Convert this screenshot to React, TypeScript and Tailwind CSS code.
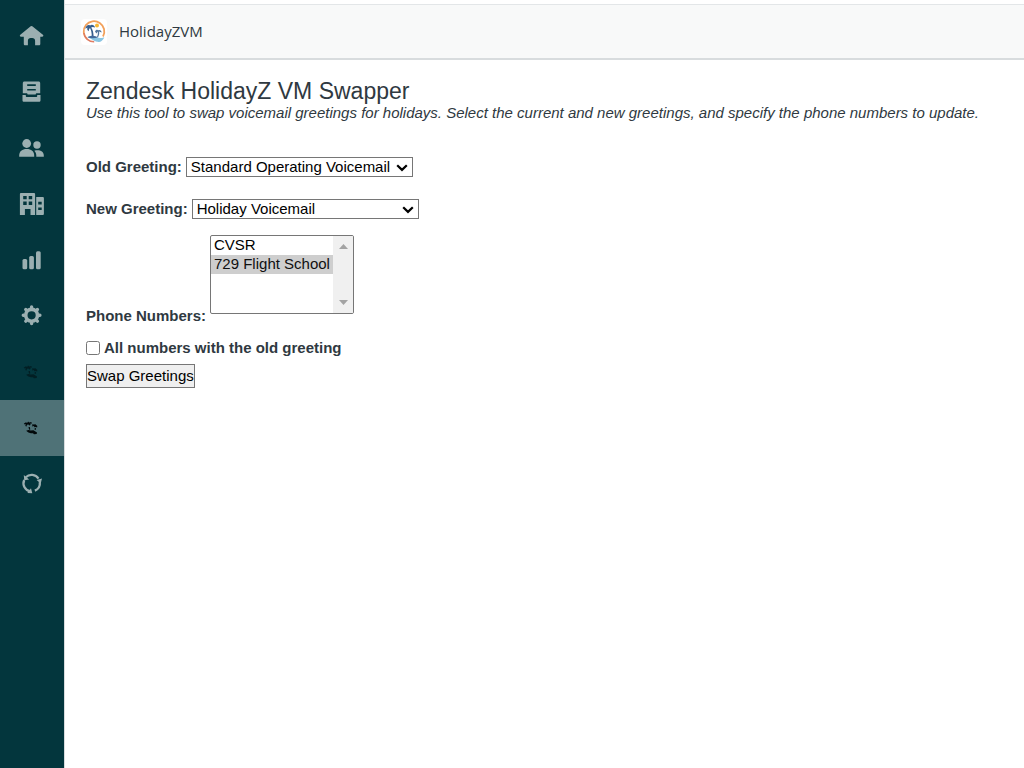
import React from 'react';

const navItems = [
  {
    label: 'Home',
    icon: (
      <svg width="26" height="26" viewBox="0 0 26 26" fill="currentColor">
        <path d="M11.7 3.3a1.3 1.3 0 0 1 1.6 0l10.6 8.4c1 .9.4 2-.8 2h-1.800v7c0 1-.5 1.600-1.400 1.600h-3.800v-4.600c0-1.700-1.200-2.700-2.800-2.700h-1.600c-1.600 0-2.800 1-2.800 2.700v4.600H6.200c-.9 0-1.400-.6-1.400-1.600v-7H2.100c-1.200 0-1.800-1.100-.8-2z" />
      </svg>
    ),
  },
  {
    label: 'Views',
    icon: (
      <svg width="26" height="26" viewBox="0 0 26 26" fill="currentColor">
        <path fillRule="evenodd" d="M5.500 2.500h14c1 0 1.700.7 1.700 1.700v10h-3.200c-.8 0-1.300.5-1.300 1.300H8.600c0-.8-.5-1.300-1.300-1.300H3.800v-10c0-1 .7-1.700 1.700-1.700zM8.200 5.300v1.600h8.600V5.300zm0 4.700v1.600h8.600V10z" />
        <path d="M3.500 16h3.300v.9c0 .7.400 1.100 1 1.100h9.400c.6 0 1-.4 1-1.100V16h3.300v5.200c0 1-.6 1.500-1.600 1.500H5.100c-1 0-1.600-.5-1.600-1.500z" />
      </svg>
    ),
  },
  {
    label: 'Customers',
    icon: (
      <svg width="26" height="26" viewBox="0 0 26 26" fill="currentColor">
        <circle cx="7.700" cy="8.500" r="4.400" />
        <circle cx="18" cy="10" r="3.700" />
        <path d="M.2 21.700v-1.300c0-4 3-6.400 7.500-6.400s7.500 2.400 7.500 6.400v1.300z" />
        <path d="M15.300 15.700c5-1.400 9.500.6 9.500 4.700v1.300h-7.500c.2-2.500-.3-4.400-2-6z" />
      </svg>
    ),
  },
  {
    label: 'Organizations',
    icon: (
      <svg width="26" height="26" viewBox="0 0 26 26" fill="currentColor">
        <path fillRule="evenodd" d="M2.200 2h12.600c.8 0 1.300.5 1.300 1.300V24h-4.600v-6H5.900v6H.9V3.300C.9 2.500 1.400 2 2.200 2zM4.200 5v3.300h3.500V5zm5.500 0v3.300h3.500V5zM4.200 10.500v3.400h3.500v-3.400zm5.500 0v3.400h3.500v-3.400z" />
        <path fillRule="evenodd" d="M17.200 6h6.400c.8 0 1.300.5 1.300 1.300v15.400c0 .8-.5 1.300-1.300 1.300h-6.400zm2 4.800v2.700h3.500v-2.700zm0 5.600v2.700h3.500v-2.700z" />
      </svg>
    ),
  },
  {
    label: 'Reporting',
    icon: (
      <svg width="26" height="26" viewBox="0 0 26 26" fill="currentColor">
        <rect x="3.500" y="12" width="4.700" height="10.300" rx="1.500" />
        <rect x="10.200" y="9" width="4.700" height="13.300" rx="1.500" />
        <rect x="17" y="4.300" width="4.700" height="18" rx="1.500" />
      </svg>
    ),
  },
  {
    label: 'Admin',
    icon: (
      <svg width="26" height="26" viewBox="0 0 26 26" fill="none" stroke="currentColor">
        <circle cx="12.600" cy="12.300" r="5.900" strokeWidth="3.600" />
        <path
          d="M12.600 4.700v-.7M12.600 19.900v.7M5 12.300h-.7M20.200 12.300h.7M7.300 7l-.5-.5M17.900 7l.5-.5M7.300 17.600l-.5.5M17.900 17.600l.5.5"
          strokeWidth="3.400"
          strokeLinecap="round"
        />
      </svg>
    ),
  },
  { label: 'HolidayZ', icon: <PalmGlyph faded /> },
  { label: 'HolidayZVM', icon: <PalmGlyph />, active: true },
  {
    label: 'Sync',
    icon: (
      <svg width="26" height="26" viewBox="0 0 26 26" fill="none" stroke="currentColor" strokeWidth="2.300">
        <path d="M6.800 6.300A8.300 8.300 0 0 1 19.500 7.600M20.800 11a8.300 8.300 0 0 1-4.900 8.600M11.500 20.500a8.300 8.300 0 0 1-6.300-11.500" />
        <path fill="currentColor" stroke="none" d="M4.800 4l.4 5.200 4.900-.8zM23 7.600l-5.400 1.500 4.100 3.300zM8.300 22l5 .2-1.300-4.900z" />
      </svg>
    ),
  },
];

function PalmGlyph({ faded }: { faded?: boolean }) {
  return (
    <svg width="26" height="26" viewBox="0 0 26 26" fill="#02080a" className={faded ? 'opacity-50' : 'opacity-100'}>
      <path d="M4.800 8.800l1.600-1.300 2 .2.700-1.200 1 1 2.300-.4.300 1.700-1.500-.3.300 1.300-1 .6-1.100-1-1.500.4-.3 1.600-1.300-.3.600-2-1 .3z" />
      <path d="M13.300 9.300l1.600.2 1.500-.3 1.900 1.800-.2 1.500-1.300-.6-1.300.3-.7-1.200-1.500.6zM9.500 11.900l1.300.1.500 2.500-1.200.2zM15.600 13.300l1.200-.2.200 1.500-1.200.4z" />
      <path d="M7.200 15.800l2.200-.9 2.400.6 2.600-.2 3.600 2.100-.3 1.500-2.700.3-1-.9-2.200-.1-2.300-.6-1.400-1z" />
    </svg>
  );
}

const AppLogo = () => (
  <svg width="26" height="26" viewBox="0 0 26 26" fill="none">
    <path d="M6 20A10.300 10.300 0 1 1 22 17.500" stroke="#f2a05a" strokeWidth="1.800" />
    <path d="M2.800 14a10.300 10.300 0 0 0 10.400 8.800" stroke="#df7c62" strokeWidth="1.500" />
    <circle cx="16" cy="6.600" r="2" fill="#f7b733" />
    <path d="M4.300 9.800C4.800 6.500 7.400 5.300 9 6.400c2-1.200 4.400-.4 5 2-1.700-.7-2.800-.7-3.800 0 1.800 2.600 2.300 5.300 2.400 9.100h-1.800c0-3.700-.6-6.300-1.800-8.500-.9.800-1.300 1.800-1.200 3.300-1.600-1-2-2-1.300-3.700z" fill="#365e8d" />
    <path d="M14 12.400c.8-2 2.500-2 3.400-1.200 1.700-.7 3.100.5 3.200 2.300l-2.500-1c.4 2 0 3.800-1 5.600H16c.8-2 1.100-3.800.7-5.500l-1.300 1.800z" fill="#52769d" />
    <path d="M6.700 18.200c3-1.600 7.700-1.300 11.100.5 2.500.8 4.200.3 5.500-.8-.8 3.300-4 5.700-7.300 4.900-3.600-.8-5.400-3.300-9.300-4.600z" fill="#8ac5e2" />
    <path d="M6.500 18.200c3-2 7-2 10.500 0-3 1.400-7 1.600-10.500 0z" fill="#42699a" />
  </svg>
);

const GreetingSelect: React.FC<{ id: string; label: string; value: string }> = ({ id, label, value }) => (
  <div className="mb-[22px] flex items-center gap-1">
    <label htmlFor={id} className="font-bold">{label}</label>
    <div className="relative">
      <select id={id} className="block h-5 w-[227px] appearance-none border border-[#767676] bg-white px-1 leading-4 text-black">
        <option>{value}</option>
      </select>
      <svg
        width="12"
        height="8"
        viewBox="0 0 12 8"
        fill="none"
        stroke="#000"
        strokeWidth="2.200"
        className="pointer-events-none absolute top-[7px] right-[5px]"
      >
        <path d="M1.200 1.200L6 5.900l4.800-4.700" />
      </svg>
    </div>
  </div>
);

const App: React.FC = () => {
  return (
    <div className="flex min-h-screen bg-white font-['Liberation_Sans',Arial,sans-serif] text-[#2f3941]">
      <nav className="w-16 shrink-0 bg-[#03363d] pt-2 text-[#9bafb1]">
        {navItems.map((item) => (
          <a
            key={item.label}
            href="#"
            aria-label={item.label}
            className={`flex h-14 items-center justify-center ${item.active ? 'bg-[#4f7277]' : ''}`}
          >
            {item.icon}
          </a>
        ))}
      </nav>

      <div className="min-w-0 flex-1 border-l border-[#d8dcde] pt-1">
        <header className="flex h-14 items-center gap-3 border-t border-b-2 border-t-[#e3e6e8] border-b-[#d8dcde] bg-[#f8f9f9] px-4">
          <span className="rounded bg-white">
            <AppLogo />
          </span>
          <span className="font-['Open_Sans',sans-serif] text-[15px] font-medium">HolidayZVM</span>
        </header>

        <main className="px-[21px] pt-5 text-[15px] leading-5">
          <h1 className="text-[23px] leading-[23px]">Zendesk HolidayZ VM Swapper</h1>
          <p className="italic">
            Use this tool to swap voicemail greetings for holidays. Select the current and new greetings, and specify the phone numbers to update.
          </p>

          <form className="pt-[34px]" onSubmit={(e) => e.preventDefault()}>
            <GreetingSelect id="old" label="Old Greeting:" value="Standard Operating Voicemail" />
            <GreetingSelect id="new" label="New Greeting:" value="Holiday Voicemail" />
            <div className="-mt-1.5 flex items-end gap-1">
              <label htmlFor="phones" className="-mb-3 font-bold">Phone Numbers:</label>
              <div className="flex h-[79px] w-36 overflow-hidden rounded-xs border border-[#767676]">
                <select id="phones" multiple size={4} defaultValue={['729 Flight School']} className="min-w-0 flex-1 overflow-hidden text-black">
                  <option className="min-h-[19px] px-[3px]">CVSR</option>
                  <option className="min-h-[19px] px-[3px]">729 Flight School</option>
                </select>
                <div className="flex w-5 flex-col items-center justify-between bg-[#f0f0f0] py-2">
                  <svg width="9" height="5" viewBox="0 0 9 5" fill="#a3a3a3"><path d="M0 5L4.500 0 9 5z" /></svg>
                  <svg width="9" height="5" viewBox="0 0 9 5" fill="#a3a3a3"><path d="M0 0h9L4.500 5z" /></svg>
                </div>
              </div>
            </div>
            <div className="mt-6 flex items-center gap-1">
              <input id="all" type="checkbox" className="size-[14px]" />
              <label htmlFor="all" className="font-bold">All numbers with the old greeting</label>
            </div>
            <button type="submit" className="mt-1.5 h-6 border border-[#767676] bg-[#efefef] text-black">
              Swap Greetings
            </button>
          </form>
        </main>
      </div>
    </div>
  );
};

export default App;
